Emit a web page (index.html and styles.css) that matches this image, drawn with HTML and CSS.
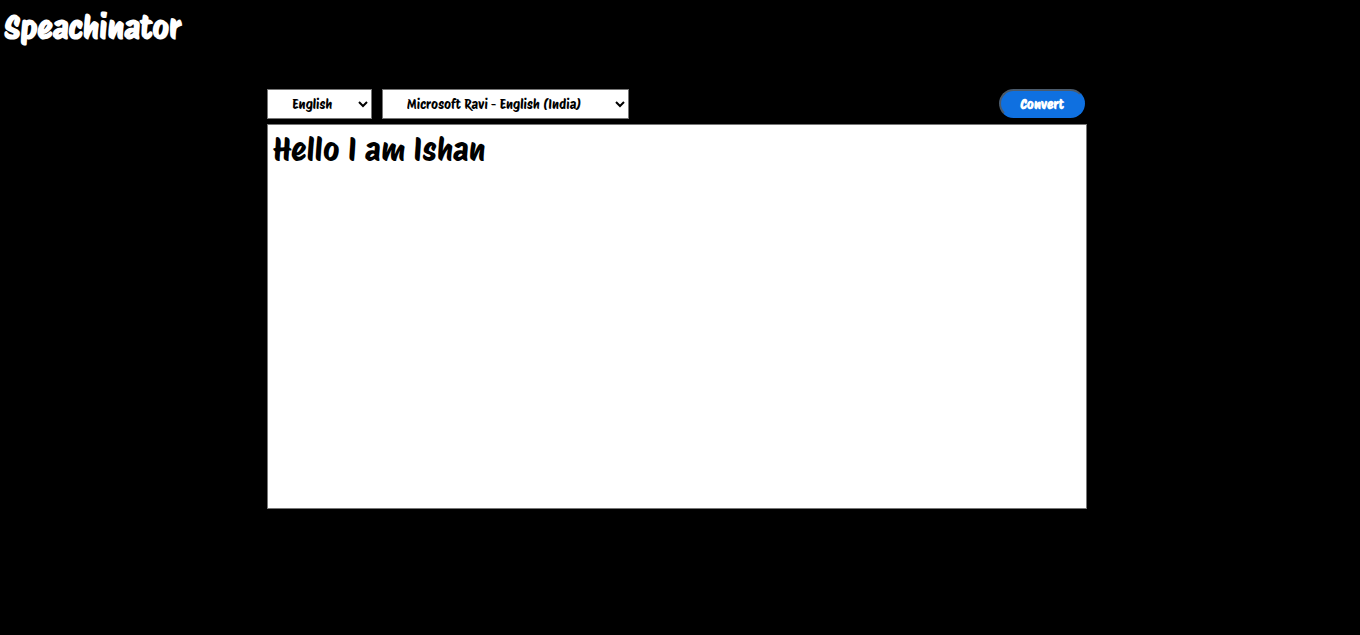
FILE: index.html
```html
<!DOCTYPE html>
<html lang="en">
<head>
<meta charset="utf-8">
<meta name="viewport" content="width=device-width, initial-scale=1">
<title>Speachinator</title>
<link rel="stylesheet" href="styles.css">
</head>
<body>
<header class="header"><h1 class="brand">Speachinator</h1></header>
<main class="converter">
  <div class="toolbar">
    <select class="picker language" aria-label="Language"><option>English</option></select>
    <select class="picker voice" aria-label="Voice"><option>Microsoft Ravi - English (India)</option></select>
    <button class="convert" type="button">Convert</button>
  </div>
  <textarea class="message" aria-label="Text to convert" spellcheck="false">Hello I am Ishan</textarea>
</main>
</body>
</html>
```
FILE: styles.css
```css
* {
  box-sizing: border-box;
}

body {
  margin: 0;
  background: #000;
  color: #fff;
  font-family: "Protest Riot", Lato, "Liberation Sans", sans-serif;
}

.header {
  padding: 4px;
}

.brand {
  margin: 0;
  font-size: 32px;
  line-height: 48px;
  font-weight: 700;
}

.converter {
  width: 60%;
  min-width: 480px;
  margin: 33px auto 0;
  padding-right: 2px;
}

.toolbar,
.message {
  width: calc(100% + 6px);
  margin-left: -5px;
}

.toolbar {
  display: flex;
  align-items: flex-start;
  gap: 10px;
  margin-bottom: 5px;
}

.picker {
  height: 30px;
  padding: 0 19px 0 20px;
  border: 1px solid #767676;
  border-radius: 0;
  background: #fff;
  color: #000;
  font-family: inherit;
}

.language {
  width: 105px;
}

.voice {
  width: 247px;
}

.convert {
  width: 86px;
  height: 29px;
  margin: 0 2px 0 auto;
  padding: 1px 0 0;
  border: 2px solid;
  border-color: #4b5b6c #0f70e0 #0f70e0 #4b5b6c;
  border-radius: 15px;
  background: #0f70e0;
  color: #fff;
  font-family: inherit;
  font-weight: 700;
}

.message {
  display: block;
  height: 385px;
  padding: 5px;
  border: 1px solid #767676;
  background: #fff;
  color: #000;
  font-family: inherit;
  font-size: 32px;
  line-height: 40px;
  resize: none;
}
```
